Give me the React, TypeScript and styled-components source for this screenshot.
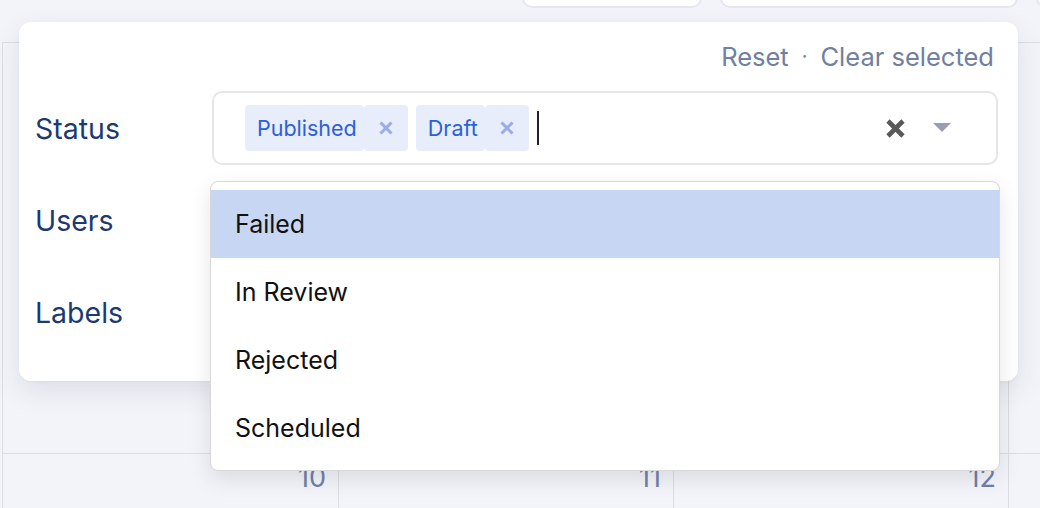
import styled, { createGlobalStyle } from 'styled-components';

const GlobalStyle = createGlobalStyle`
  html, body {
    margin: 0;
    padding: 0;
    background: #f3f4f9;
  }
  body {
    font-family: Inter, "Noto Sans", sans-serif;
  }
`;

const statusValues = ['Published', 'Draft'];
const statusOptions = ['Failed', 'In Review', 'Rejected', 'Scheduled'];
const fields = ['Status', 'Users', 'Labels'];
const toolbarCards = [180, 298, 120];
const weekDays = ['10', '11', '12', ''];

function ChipX() {
  return (
    <svg width="14" height="14" viewBox="0 0 14 14">
      <path d="M1.5 1.5 L12.5 12.5 M12.5 1.5 L1.5 12.5" stroke="currentColor" strokeWidth="3" fill="none" />
    </svg>
  );
}

function ClearX() {
  return (
    <svg width="21" height="21" viewBox="0 0 21 21">
      <path d="M3 3 L18 18 M18 3 L3 18" stroke="currentColor" strokeWidth="4.6" fill="none" />
    </svg>
  );
}

function Caret() {
  return (
    <svg width="18" height="10" viewBox="0 0 18 10">
      <path d="M0 0 H18 L9 9 Z" fill="currentColor" />
    </svg>
  );
}

export default function App() {
  return (
    <>
      <GlobalStyle />
      <Page>
        <Calendar>
          <Toolbar>
            {toolbarCards.map((w, i) => (
              <ToolCard key={i} $width={w} />
            ))}
          </Toolbar>
          <Grid>
            {weekDays.map((_, i) => (
              <Cell key={`a${i}`} $tall />
            ))}
            {weekDays.map((d, i) => (
              <Cell key={`b${i}`}>
                <DayNumber>{d}</DayNumber>
              </Cell>
            ))}
          </Grid>
        </Calendar>

        <FilterPanel>
          <PanelHeader>
            <HeaderLink>Reset</HeaderLink>
            <Dot>·</Dot>
            <HeaderLink>Clear selected</HeaderLink>
          </PanelHeader>
          <Fields>
            {fields.map((field) => (
              <FieldRow key={field}>
                <FieldLabel>{field}</FieldLabel>
                <SelectWrap $open={field === 'Status'}>
                  <Control>
                    <ValueArea>
                      {field === 'Status' &&
                        statusValues.map((v) => (
                          <Chip key={v}>
                            <ChipLabel>{v}</ChipLabel>
                            <ChipRemove>
                              <ChipX />
                            </ChipRemove>
                          </Chip>
                        ))}
                      {field === 'Status' && <Cursor />}
                    </ValueArea>
                    {field === 'Status' && (
                      <Indicators>
                        <ClearButton>
                          <ClearX />
                        </ClearButton>
                        <DropButton>
                          <Caret />
                        </DropButton>
                      </Indicators>
                    )}
                  </Control>
                  {field === 'Status' && (
                    <Menu>
                      {statusOptions.map((opt, i) => (
                        <Option key={opt} $active={i === 0}>
                          {opt}
                        </Option>
                      ))}
                    </Menu>
                  )}
                </SelectWrap>
              </FieldRow>
            ))}
          </Fields>
        </FilterPanel>
      </Page>
    </>
  );
}

const Page = styled.div`
  position: relative;
  width: 1040px;
  height: 508px;
  overflow: hidden;
  background: #f3f4f9;
`;

const Calendar = styled.div`
  display: flex;
  flex-direction: column;
`;

const Toolbar = styled.div`
  display: flex;
  gap: 18px;
  height: 42px;
  padding-left: 522px;
`;

const ToolCard = styled.div<{ $width: number }>`
  flex: none;
  width: ${(p) => p.$width}px;
  height: 40px;
  margin-top: -32px;
  background: #fff;
  border: 2px solid #e6e7ee;
  border-radius: 10px;
  box-sizing: border-box;
`;

const Grid = styled.div`
  display: grid;
  grid-template-columns: 336px 335px 335px 335px;
  margin-left: 2px;
`;

const Cell = styled.div<{ $tall?: boolean }>`
  height: ${(p) => (p.$tall ? '411px' : '80px')};
  border-left: 1px solid #dcdde2;
  border-top: 1px solid #dcdde2;
  box-sizing: border-box;
  display: flex;
  justify-content: flex-end;
  padding: 7px 12px 0 0;
`;

const DayNumber = styled.div`
  font-size: 27px;
  line-height: 34px;
  color: #6d81a9;
`;

const FilterPanel = styled.div`
  position: absolute;
  left: 19px;
  top: 22px;
  width: 999px;
  height: 359px;
  box-sizing: border-box;
  background: #fff;
  border-radius: 12px;
  box-shadow: 0 10px 28px rgba(40, 50, 90, 0.1), 0 1px 3px rgba(40, 50, 90, 0.05);
  padding: 18px 20px 32px 16px;
  display: flex;
  flex-direction: column;
`;

const PanelHeader = styled.div`
  display: flex;
  justify-content: flex-end;
  align-items: center;
  gap: 13px;
  height: 32px;
  padding-right: 4px;
  color: #6f80a1;
  font-size: 25.5px;
`;

const HeaderLink = styled.span`
  cursor: pointer;
`;

const Dot = styled.span`
  font-size: 20px;
`;

const Fields = styled.div`
  display: flex;
  flex-direction: column;
  gap: 18px;
  margin-top: 19px;
`;

const FieldRow = styled.div`
  display: grid;
  grid-template-columns: 177px 1fr;
  align-items: center;
`;

const FieldLabel = styled.div`
  font-size: 28.5px;
  color: #1c3a70;
`;

const SelectWrap = styled.div<{ $open?: boolean }>`
  position: relative;
  z-index: ${(p) => (p.$open ? 5 : 1)};
`;

const Control = styled.div`
  display: flex;
  align-items: center;
  height: 74px;
  box-sizing: border-box;
  border: 2px solid #e5e6ed;
  border-radius: 10px;
  background: #fff;
`;

const ValueArea = styled.div`
  flex: 1;
  display: flex;
  align-items: center;
  gap: 8px;
  padding-left: 31px;
`;

const Chip = styled.div`
  display: flex;
  height: 46px;
`;

const ChipLabel = styled.div`
  display: flex;
  align-items: center;
  padding: 0 7px 0 12px;
  background: #e7edfb;
  border-radius: 4px;
  font-size: 21.5px;
  color: #2c60d8;
`;

const ChipRemove = styled.div`
  display: flex;
  align-items: center;
  justify-content: center;
  width: 44px;
  background: #e7edfb;
  border-radius: 4px;
  color: #96adea;
`;

const Cursor = styled.div`
  width: 2px;
  height: 34px;
  background: #222;
`;

const Indicators = styled.div`
  display: flex;
  align-items: center;
  gap: 27px;
  padding-right: 45px;
`;

const ClearButton = styled.div`
  display: flex;
  color: #5a5a5a;
`;

const DropButton = styled.div`
  display: flex;
  color: #9b9db5;
`;

const Menu = styled.div`
  position: absolute;
  top: calc(100% + 16px);
  left: -2px;
  right: -2px;
  background: #fff;
  border: 1px solid #d8d8db;
  border-radius: 8px;
  box-shadow: 0 8px 22px rgba(0, 0, 0, 0.1);
  padding: 8px 0;
`;

const Option = styled.div<{ $active?: boolean }>`
  display: flex;
  align-items: center;
  height: 68px;
  padding: 0 24px;
  font-size: 25px;
  color: #111;
  background: ${(p) => (p.$active ? '#c7d7f3' : 'transparent')};
`;
